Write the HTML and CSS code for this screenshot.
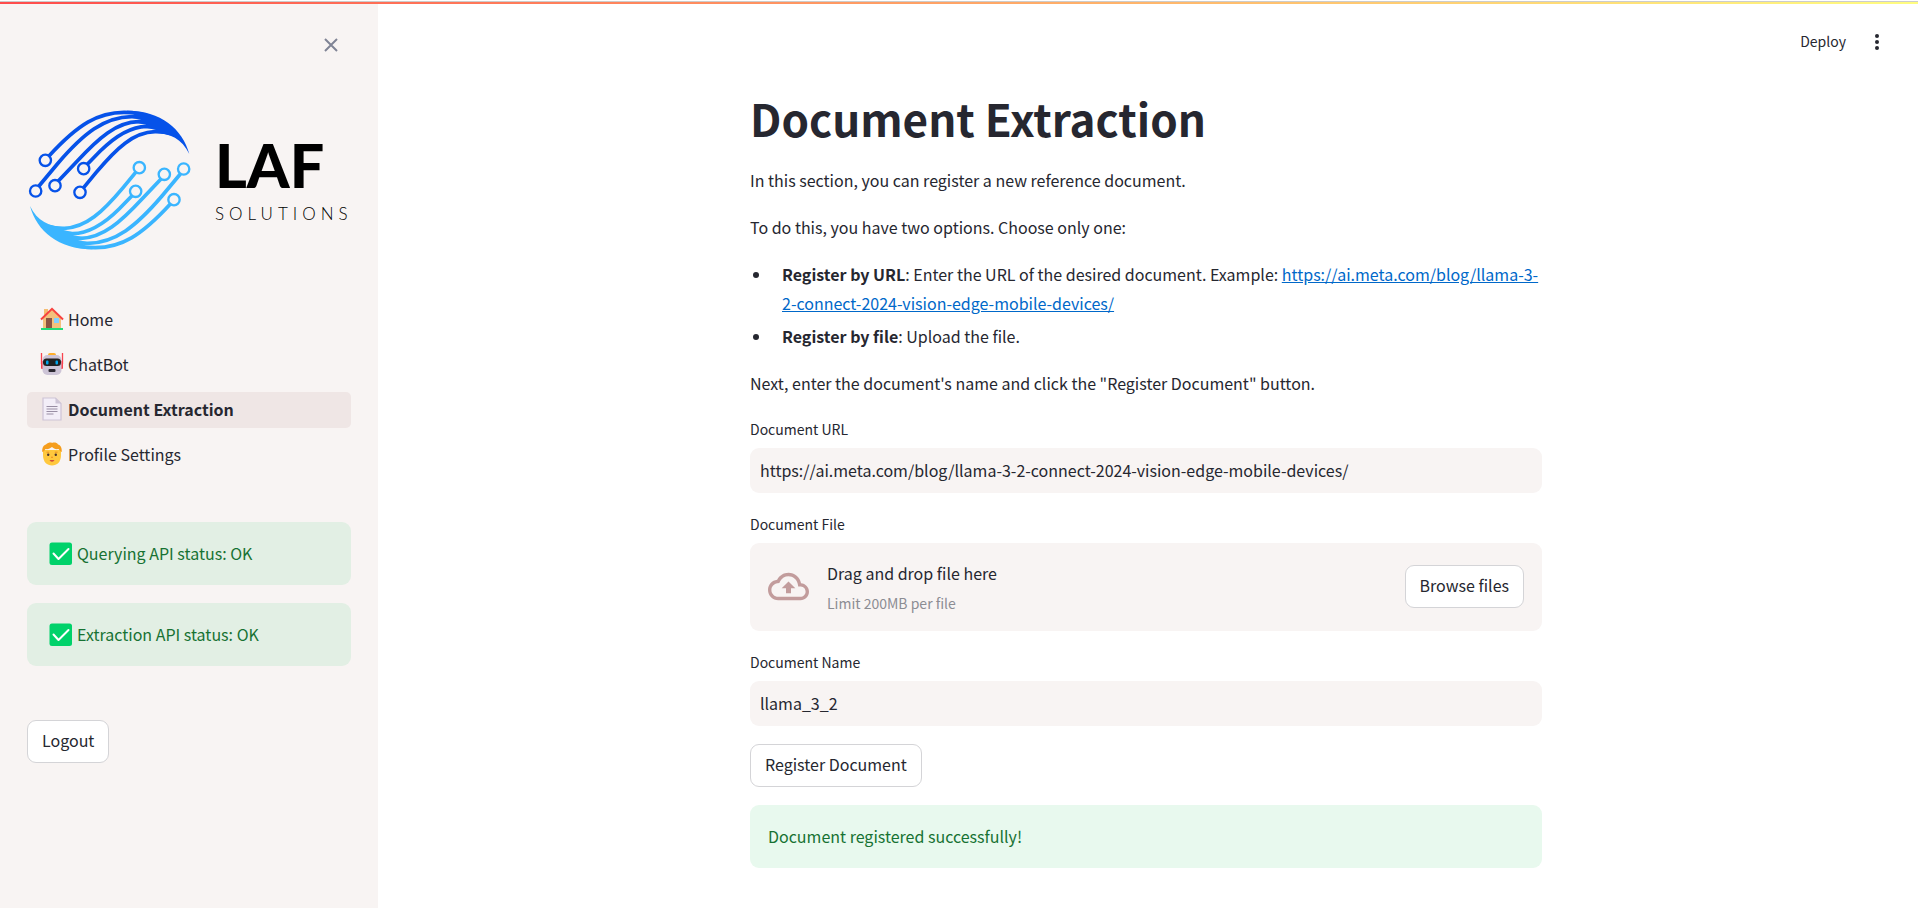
FILE: index.html
```html
<!DOCTYPE html>
<html lang="en">
<head>
<meta charset="utf-8">
<meta name="viewport" content="width=device-width, initial-scale=1">
<title>Document Extraction</title>
<link rel="stylesheet" href="styles.css">
</head>
<body>
<div class="decoration"></div>
<div class="app">
  <aside class="sidebar">
    <div class="sidebar-header">
      <button class="icon-button" type="button" aria-label="Close sidebar">
        <svg width="14" height="14" viewBox="0 0 14 14" fill="none" stroke="#808495" stroke-width="2"><path d="M1 1l12 12M13 1L1 13"/></svg>
      </button>
    </div>
    <svg class="logo" viewBox="0 0 324 160" role="img" aria-label="LAF Solutions">
      <defs>
        <g id="wing" fill="none" stroke="currentColor" stroke-width="11">
          <path d="M87 168C175 72 235 37 312 37C345 37 375 43 400 54"/>
          <path d="M57 258L112 192C190 101 252 51 335 50C365 50 390 56 415 66"/>
          <path d="M115 243L172 183C235 115 290 66 355 65C385 64 405 70 430 78"/>
          <path d="M202 193L240 154C290 104 335 80 380 79C405 79 425 82 445 89"/>
          <path d="M191 263L228 218C290 144 340 97 405 95C425 94 440 97 455 101"/>
          <path d="M320 32C420 31 488 86 508 162C486 116 450 100 405 99L408 90L372 82L378 74L350 69L364 60L335 53L350 46Z" fill="currentColor" stroke="none"/>
          <g stroke-width="7"><circle cx="76" cy="181" r="17"/><circle cx="47" cy="273" r="17"/><circle cx="105" cy="257" r="17"/><circle cx="191" cy="206" r="17"/><circle cx="180" cy="277" r="17"/></g>
        </g>
      </defs>
      <g transform="translate(-7 0) scale(.3333)">
        <use href="#wing" color="#0652e9"/>
        <use href="#wing" color="#3ab5ff" transform="rotate(180 269 240)"/>
      </g>
      <text class="logo-name" x="188" y="88">LAF</text>
      <text class="logo-tag" x="188" y="120">SOLUTIONS</text>
    </svg>
    <nav class="nav">
      <a class="nav-link" href="#home">
        <svg class="emoji" viewBox="0 0 24 24"><path d="M4 2h4v7H4z" fill="#f5bd72"/><path d="M3 11l9-9 9 9v11H3z" fill="#f3c17d"/><path d="M1 12.500L12 1.800l11 10.700" fill="none" stroke="#f8423f" stroke-width="2"/><path d="M6 11h6v10H6z" fill="#8c5543"/><path d="M14 11h5v5h-5z" fill="#83cfff"/><path d="M1 21h22v2H1z" fill="#21dc78"/></svg>
        Home</a>
      <a class="nav-link" href="#chatbot">
        <svg class="emoji" viewBox="0 0 24 24"><path d="M1.500 1v11M22.500 1v11" stroke="#f8424e" stroke-width="1.300"/><path d="M1 9h3v8H2a1 1 0 0 1-1-1zM20 9h3v7a1 1 0 0 1-1 1h-2z" fill="#f8424e"/><rect x="2.500" y="3" width="19" height="20" rx="5" fill="#cdc4d6"/><path d="M8 3a2 2 0 0 1 2-2h4a2 2 0 0 1 2 2z" fill="#ffae2b"/><rect x="3" y="6.500" width="18" height="7.500" rx="3.500" fill="#212121"/><rect x="6" y="8.500" width="2.500" height="4" rx="1" fill="#00a6ed"/><rect x="15.500" y="8.500" width="2.500" height="4" rx="1" fill="#00a6ed"/><rect x="8.500" y="17" width="7" height="3" rx="1" fill="#2b2730"/></svg>
        ChatBot</a>
      <a class="nav-link active" href="#extraction" aria-current="page">
        <svg class="emoji" viewBox="0 0 24 24"><path d="M3 1h12.500l5.500 5.500V23H3z" fill="#f3eef8" stroke="#cdc4d6" stroke-width="1.200"/><path d="M15.500 1L21 6.500h-5.500z" fill="#cdc4d6"/><path d="M6.500 9.500h11M6.500 12h11M6.500 14.500h11M6.500 17h7" stroke="#998ea4" stroke-width="1"/></svg>
        Document Extraction</a>
      <a class="nav-link" href="#profile">
        <svg class="emoji" viewBox="0 0 24 24"><path d="M3 8h18v5c0 7-4 10.500-9 10.500S3 20 3 13z" fill="#ffc83d"/><path d="M2.200 10C2 5 4 3 6 2.500 8 .5 11 0 12 1c2-1 5-.5 6 1.500 2.500.5 4 3 3.800 7.500-1.500-.5-2.300-2-3.300-3-3 .5-5-.5-6.500-2C10 6.500 8 7.500 5.500 7 4.500 8.500 4 9.500 2.200 10z" fill="#f59d1d"/><circle cx="8.200" cy="12.800" r="1.200" fill="#493330"/><circle cx="15.800" cy="12.800" r="1.200" fill="#493330"/><path d="M6.500 10.200h2.700M14.800 10.200h2.700" stroke="#e9871d" stroke-width=".9"/><path d="M12 14l-1 2h2z" fill="#f08a1d"/><path d="M9.500 18.300h5c-1.200 1.700-3.800 1.700-5 0z" fill="#c6233d"/></svg>
        Profile Settings</a>
    </nav>
    <div class="statuses">
      <div class="alert">
        <svg class="emoji" viewBox="0 0 24 24"><rect x=".5" y=".5" width="22.500" height="22.500" rx="2.500" fill="#00d26a"/><path d="M4.500 11.500l5 5.500L19.500 7" fill="none" stroke="#fff" stroke-width="2" stroke-linecap="round" stroke-linejoin="round"/></svg>
        Querying API status: OK</div>
      <div class="alert">
        <svg class="emoji" viewBox="0 0 24 24"><rect x=".5" y=".5" width="22.500" height="22.500" rx="2.500" fill="#00d26a"/><path d="M4.500 11.500l5 5.500L19.500 7" fill="none" stroke="#fff" stroke-width="2" stroke-linecap="round" stroke-linejoin="round"/></svg>
        Extraction API status: OK</div>
    </div>
    <button class="button" type="button">Logout</button>
  </aside>
  <main class="main">
    <header class="toolbar">
      <button class="deploy" type="button">Deploy</button>
      <button class="icon-button" type="button" aria-label="Menu">
        <svg width="6" height="16" viewBox="0 0 6 16" fill="#262730"><circle cx="3" cy="2" r="2"/><circle cx="3" cy="8" r="2"/><circle cx="3" cy="14" r="2"/></svg>
      </button>
    </header>
    <form class="content">
      <h1>Document Extraction</h1>
      <p>In this section, you can register a new reference document.</p>
      <p>To do this, you have two options. Choose only one:</p>
      <ul>
        <li><div><strong>Register by URL</strong>: Enter the URL of the desired document. Example: <a href="https://ai.meta.com/blog/llama-3-2-connect-2024-vision-edge-mobile-devices/">https://ai.meta.com/blog/llama-3-2-connect-2024-vision-edge-mobile-devices/</a></div></li>
        <li><div><strong>Register by file</strong>: Upload the file.</div></li>
      </ul>
      <p>Next, enter the document's name and click the "Register Document" button.</p>
      <div class="field">
        <label for="doc-url">Document URL</label>
        <input class="text-input" id="doc-url" type="text" value="https://ai.meta.com/blog/llama-3-2-connect-2024-vision-edge-mobile-devices/">
      </div>
      <div class="field">
        <label for="doc-file">Document File</label>
        <div class="dropzone">
          <input id="doc-file" type="file" hidden>
          <svg class="cloud" viewBox="0 0 24 24" fill="#c29c9c"><path d="M19.350 10.040C18.670 6.590 15.640 4 12 4 9.110 4 6.600 5.640 5.350 8.040 2.340 8.360 0 10.910 0 14c0 3.310 2.690 6 6 6h13c2.760 0 5-2.240 5-5 0-2.640-2.050-4.780-4.650-4.960zM19 18H6c-2.210 0-4-1.790-4-4 0-2.050 1.530-3.760 3.560-3.970l1.070-.11.5-.95C8.080 7.140 9.940 6 12 6c2.620 0 4.880 1.860 5.390 4.430l.3 1.500 1.530.11c1.560.1 2.780 1.410 2.780 2.960 0 1.650-1.350 3-3 3zM8 13h2.550v3h2.900v-3H16l-4-4z"/></svg>
          <div class="drop-text">
            <span>Drag and drop file here</span>
            <small>Limit 200MB per file</small>
          </div>
          <button class="button" type="button">Browse files</button>
        </div>
      </div>
      <div class="field">
        <label for="doc-name">Document Name</label>
        <input class="text-input" id="doc-name" type="text" value="llama_3_2">
      </div>
      <button class="button" type="button">Register Document</button>
      <div class="alert" role="status">Document registered successfully!</div>
    </form>
  </main>
</div>
</body>
</html>
```

FILE: styles.css
```css
* {
  box-sizing: border-box;
}

body {
  margin: 0;
  min-height: 100vh;
  display: flex;
  flex-direction: column;
  background: #fff;
  color: #262730;
  font: 16px/29px "Noto Sans CJK SC", "Noto Sans", sans-serif;
}

button,
input {
  font: inherit;
  color: inherit;
}

.decoration {
  height: 4px;
  border-top: 1px solid #fff;
  background:
    linear-gradient(#ccc, #ccc) top / 100% 1px no-repeat,
    linear-gradient(90deg, #ff4b4b, #fffd80);
}

.app {
  flex: 1;
  display: flex;
}

.sidebar {
  flex: 0 0 378px;
  padding: 0 27px;
  background: #f8f4f3;
}

.sidebar-header {
  height: 82px;
  padding-right: 13px;
  display: flex;
  align-items: center;
  justify-content: flex-end;
}

.icon-button {
  display: flex;
  padding: 0;
  border: 0;
  background: none;
}

.logo {
  display: block;
  width: 100%;
  margin-top: 14px;
}

.logo-name {
  font: 900 61px Lato, sans-serif;
}

.logo-tag {
  font: 300 17px Lato, sans-serif;
  letter-spacing: 5px;
}

.nav {
  margin-top: 42px;
  display: grid;
  gap: 9px;
}

.nav-link {
  height: 36px;
  padding: 0 13px 2px;
  display: flex;
  align-items: center;
  gap: 4px;
  border-radius: 5px;
  color: inherit;
  text-decoration: none;
}

.nav-link.active {
  background: #efe6e5;
  font-weight: 700;
}

.emoji {
  flex: none;
  width: 24px;
  height: 24px;
}

.statuses {
  margin: 49px 0 54px;
  display: grid;
  gap: 18px;
}

.alert {
  padding: 17px 18px;
  border-radius: 9px;
  background: #e8f9ee;
  color: #177233;
}

.statuses .alert {
  padding-left: 22px;
  display: flex;
  align-items: center;
  gap: 4px;
  background: #e2efe4;
}

.button {
  height: 43px;
  padding: 0 14px 2px;
  border: 1px solid #d4d4d7;
  border-radius: 9px;
  background: #fff;
}

.main {
  flex: 1;
  min-width: 0;
  padding-right: 4px;
}

.toolbar {
  height: 75px;
  padding-right: 34px;
  display: flex;
  align-items: center;
  justify-content: flex-end;
  gap: 28px;
}

.deploy {
  padding: 0;
  border: 0;
  background: none;
  font-size: 14px;
}

.content {
  max-width: 792px;
  margin: 0 auto;
  padding: 9px 0 40px;
  display: flex;
  flex-direction: column;
  gap: 18px;
}

.content > .button {
  align-self: flex-start;
}

h1 {
  margin: 0;
  font-size: 44px;
  line-height: 60px;
  font-weight: 700;
}

p {
  margin: 0;
}

ul {
  margin: 0;
  padding: 0;
  list-style: none;
  display: grid;
  gap: 4px;
}

li {
  display: grid;
  grid-template-columns: 6px 1fr;
  column-gap: 23px;
  padding-left: 3px;
}

li::before {
  content: "";
  width: 6px;
  height: 6px;
  margin-top: 12px;
  border-radius: 50%;
  background: #262730;
}

strong {
  font-weight: 700;
}

li a {
  color: #0068c9;
}

.field {
  display: grid;
  gap: 6px;
}

label {
  font-size: 14px;
  line-height: 26px;
}

.text-input {
  width: 100%;
  height: 45px;
  padding: 0 10px 2px;
  border: 0;
  border-radius: 9px;
  background: #f8f4f3;
}

.dropzone {
  height: 88px;
  padding: 0 18px 2px;
  display: flex;
  align-items: center;
  border-radius: 9px;
  background: #f8f4f3;
}

.cloud {
  width: 41px;
  height: 41px;
  margin-right: 18px;
}

.drop-text {
  flex: 1;
  padding-top: 5px;
  display: grid;
  gap: 1px;
}

.drop-text small {
  color: #8c8d93;
  font-size: 14px;
}
```
